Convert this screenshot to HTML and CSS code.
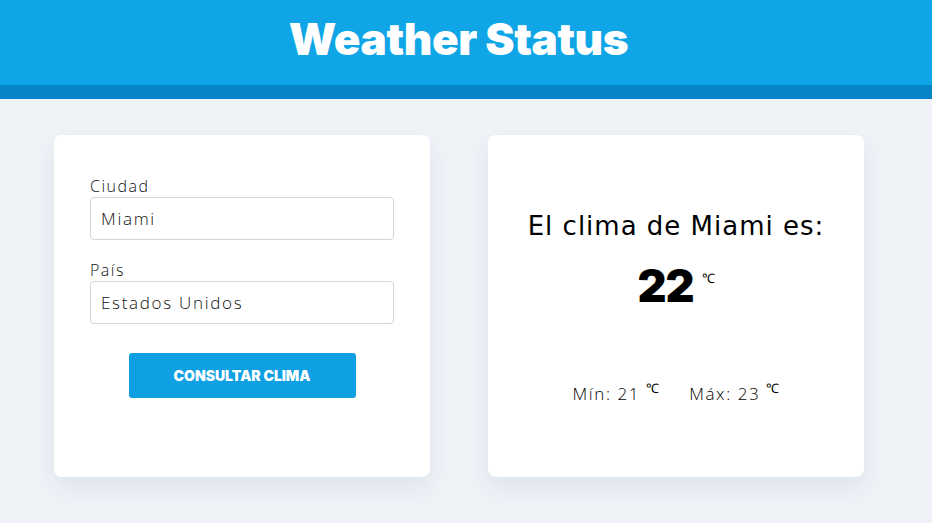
FILE: index.html
```html
<!DOCTYPE html>
<html lang="es">
<head>
<meta charset="utf-8">
<title>Weather Status</title>
<link rel="stylesheet" href="styles.css">
</head>
<body>
<header class="header">
  <h1 class="title">Weather Status</h1>
</header>
<div class="stripe"></div>
<main class="main">
  <section class="card form-card">
    <form class="form">
      <div class="field">
        <label class="label" for="ciudad">Ciudad</label>
        <input class="input" id="ciudad" type="text" value="Miami">
      </div>
      <div class="field">
        <label class="label" for="pais">País</label>
        <input class="input" id="pais" type="text" value="Estados Unidos">
      </div>
      <div class="actions">
        <button class="button" type="button">Consultar clima</button>
      </div>
    </form>
  </section>
  <section class="card result-card">
    <h2 class="result-title">El clima de Miami es:</h2>
    <p class="temp">22 <span class="unit">&#8451;</span></p>
    <p class="range">
      <span class="range-item">Mín: 21 <sup class="unit-small">&#8451;</sup></span>
      <span class="range-item">Máx: 23 <sup class="unit-small">&#8451;</sup></span>
    </p>
  </section>
</main>
</body>
</html>
```
FILE: styles.css
```css
* { box-sizing: border-box; }
html, body { margin: 0; padding: 0; }
body {
  background: #eff3f8;
  font-family: "Open Sans", "DejaVu Sans", sans-serif;
  color: #111;
  height: 523px;
  overflow: hidden;
}
.header {
  background: #0fa5e7;
  height: 85px;
  display: flex;
  align-items: center;
  justify-content: center;
  padding-right: 15px;
}
.title {
  margin: 0;
  color: #fff;
  font-family: Inter, "Liberation Sans", sans-serif;
  font-weight: 900;
  font-size: 44px;
  letter-spacing: -0.4px;
  padding-bottom: 8px;
}
.stripe {
  height: 14px;
  background: #0585c7;
}
.main {
  display: grid;
  grid-template-columns: 376px 376px;
  gap: 58px;
  padding: 36px 0 0 54px;
}
.card {
  background: #fff;
  border-radius: 8px;
  height: 342px;
  box-shadow: 0 10px 24px rgba(30, 50, 90, 0.08);
}
.form-card {
  padding: 40px 36px;
}
.form { display: flex; flex-direction: column; }
.field { display: flex; flex-direction: column; margin-bottom: 19px; }
.label {
  font-size: 16px;
  font-weight: 300;
  color: #111;
  letter-spacing: 1.5px;
  line-height: 22px;
}
.input {
  height: 43px;
  border: 1px solid #cfd6df;
  border-radius: 4px;
  padding: 0 10px;
  font-family: "Open Sans", "DejaVu Sans", sans-serif;
  font-weight: 300;
  font-size: 17px;
  letter-spacing: 1.7px;
  color: #111;
  background: #fff;
}
.actions {
  display: flex;
  justify-content: center;
  padding-top: 10px;
}
.button {
  width: 227px;
  height: 45px;
  border: none;
  border-radius: 3px;
  background: #0fa0e3;
  color: #fff;
  font-family: Inter, "Liberation Sans", sans-serif;
  font-weight: 900;
  font-size: 14px;
  text-transform: uppercase;
  letter-spacing: 0;
}
.result-card {
  display: flex;
  flex-direction: column;
  align-items: center;
  padding-top: 75px;
}
.result-title {
  margin: 0;
  font-family: "DejaVu Sans", sans-serif;
  font-weight: 400;
  font-size: 26px;
  line-height: 32px;
  color: #000;
  letter-spacing: 1px;
}
.temp {
  margin: 20px 0 0;
  font-family: Inter, "Liberation Sans", sans-serif;
  font-weight: 900;
  font-size: 45px;
  line-height: 48px;
  letter-spacing: -1px;
  color: #000;
  display: flex;
  align-items: flex-start;
  gap: 8px;
}
.unit {
  font-family: "Liberation Sans", sans-serif;
  font-weight: 400;
  font-size: 13px;
  line-height: 14px;
  letter-spacing: 0;
  margin-top: 10px;
}
.range {
  margin: 69px 0 0;
  display: flex;
  gap: 30px;
  font-size: 17px;
  font-weight: 300;
  letter-spacing: 1.6px;
  color: #000;
}
.unit-small {
  font-family: "Liberation Sans", sans-serif;
  font-size: 13px;
  letter-spacing: 0;
}
```
